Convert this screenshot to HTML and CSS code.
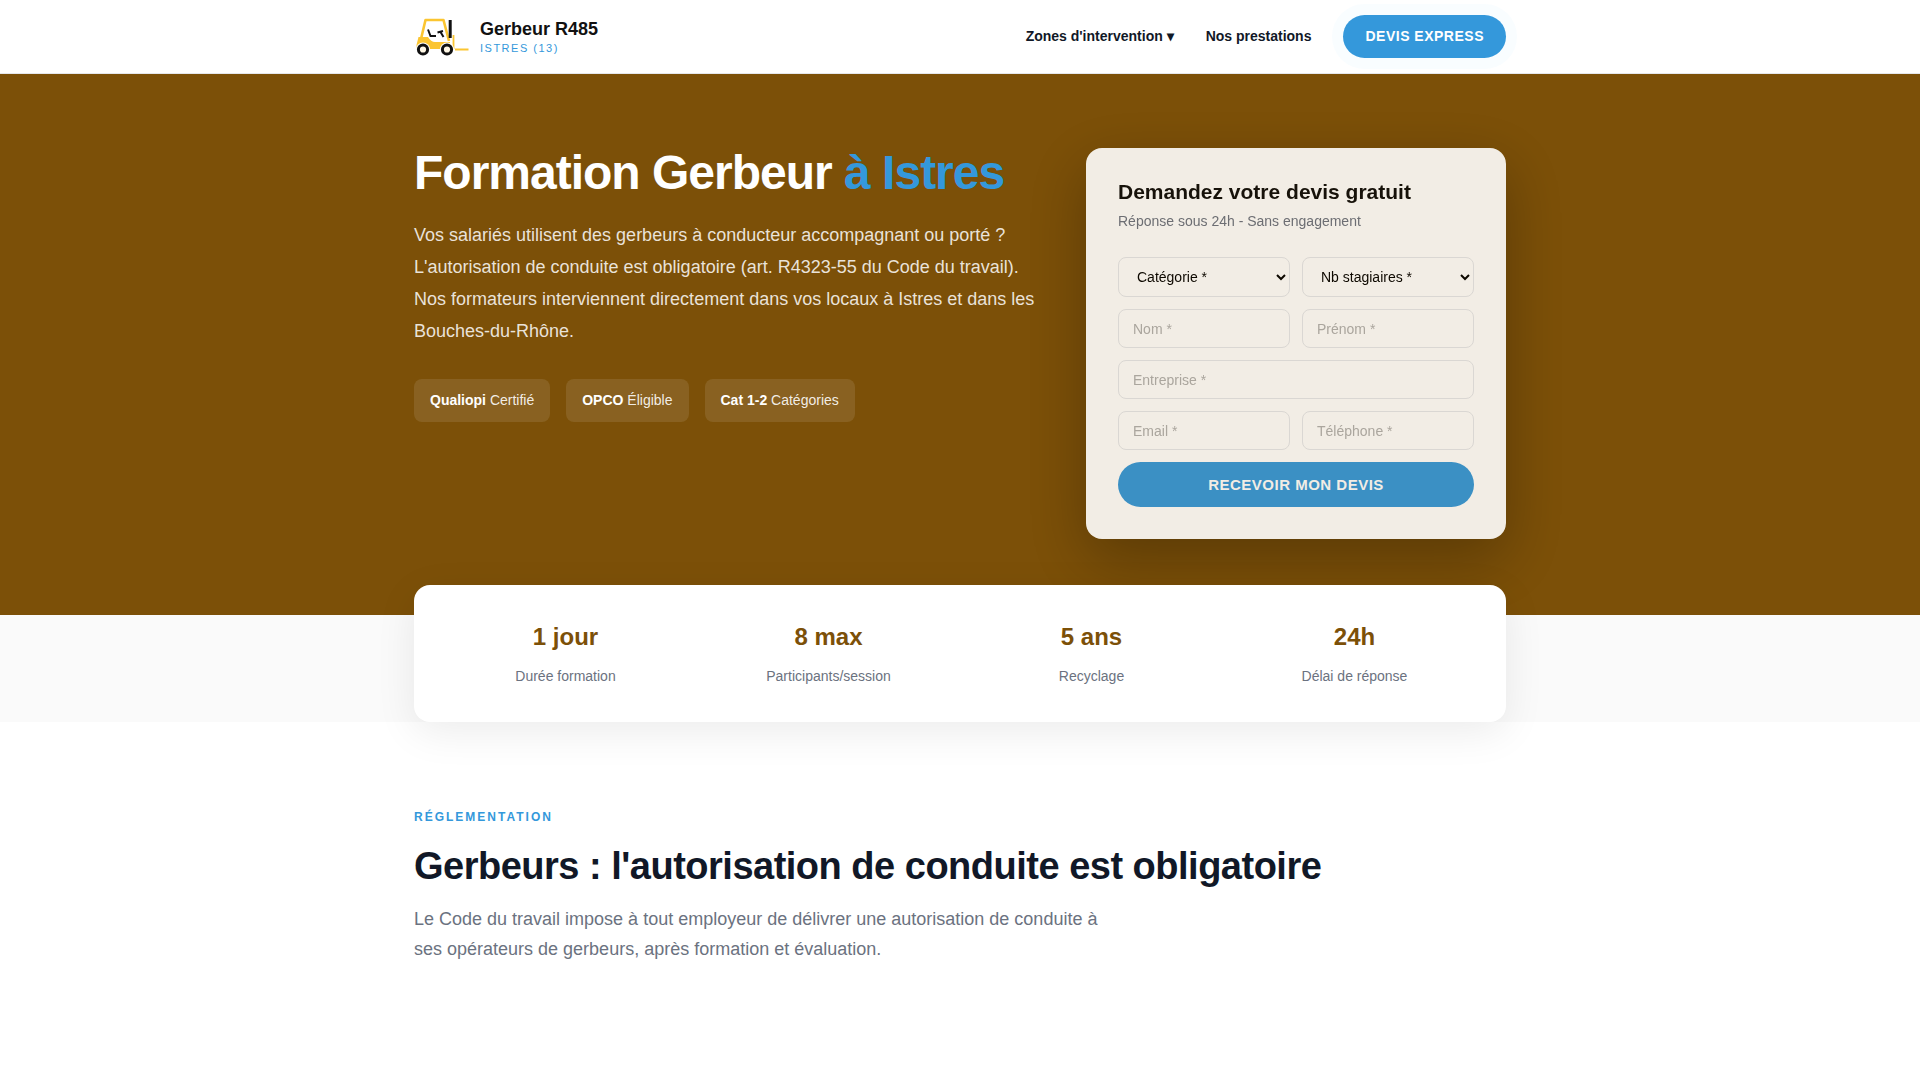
FILE: index.html
```html
<!DOCTYPE html>
<html lang="fr">
<head>
    <meta charset="UTF-8">
    <meta name="viewport" content="width=device-width, initial-scale=1.0">
    <title>Formation Gerbeur R485 à Istres</title>
    <link rel="stylesheet" href="styles.css">
</head>
<body>
    <header class="header">
        <div class="container header-inner">
            <a href="#" class="logo">
                <svg class="logo-icon" viewBox="0 0 56 40" aria-hidden="true">
                    <path d="M7 22 L11.5 3 H29.5 L35 24" fill="none" stroke="#fbc531" stroke-width="2.6" stroke-linejoin="round"/>
                    <path d="M2.5 28 L4.5 20 H14 Q17 25 21 25 H36 V32 H2.5 Z" fill="#fbc531"/>
                    <path d="M39.5 18 V32 M41 32.5 H54.5" fill="none" stroke="#fbc531" stroke-width="1.8"/>
                    <path d="M14 12.5 L16.5 19 H22 M23.5 15.5 L29 14 M26.5 15 L29.5 20" fill="none" stroke="#111" stroke-width="2"/>
                    <path d="M36.2 3 V21" stroke="#111" stroke-width="3"/>
                    <circle cx="9" cy="32.5" r="7" fill="#fff"/>
                    <circle cx="33" cy="32.5" r="7" fill="#fff"/>
                    <circle cx="9" cy="32.5" r="4.6" fill="#fff8e6" stroke="#111" stroke-width="3"/>
                    <circle cx="33" cy="32.5" r="4.6" fill="#fff8e6" stroke="#111" stroke-width="3"/>
                </svg>
                <span class="logo-text">
                    <span class="logo-name">Gerbeur R485</span>
                    <span class="logo-city">ISTRES (13)</span>
                </span>
            </a>
            <nav class="nav">
                <a href="#zones">Zones d'intervention ▾</a>
                <a href="#prestations">Nos prestations</a>
                <a href="#devis" class="btn-express">DEVIS EXPRESS</a>
            </nav>
        </div>
    </header>

    <section class="hero">
        <div class="container hero-grid">
            <div class="hero-content">
                <h1>Formation Gerbeur <span>à Istres</span></h1>
                <p>Vos salariés utilisent des gerbeurs à conducteur accompagnant ou porté ? L'autorisation de conduite est obligatoire (art. R4323-55 du Code du travail). Nos formateurs interviennent directement dans vos locaux à Istres et dans les Bouches-du-Rhône.</p>
                <div class="badges">
                    <div class="badge"><strong>Qualiopi</strong> Certifié</div>
                    <div class="badge"><strong>OPCO</strong> Éligible</div>
                    <div class="badge"><strong>Cat 1-2</strong> Catégories</div>
                </div>
            </div>
            <form class="form-card" id="devis">
                <h2>Demandez votre devis gratuit</h2>
                <p>Réponse sous 24h - Sans engagement</p>
                <div class="form-grid">
                    <select aria-label="Catégorie" required>
                        <option value="">Catégorie *</option>
                        <option>Catégorie 1</option>
                        <option>Catégorie 2</option>
                    </select>
                    <select aria-label="Nombre de stagiaires" required>
                        <option value="">Nb stagiaires *</option>
                        <option>1 à 4</option>
                        <option>5 à 8</option>
                    </select>
                    <input type="text" placeholder="Nom *" aria-label="Nom" required>
                    <input type="text" placeholder="Prénom *" aria-label="Prénom" required>
                    <input type="text" class="full" placeholder="Entreprise *" aria-label="Entreprise" required>
                    <input type="email" placeholder="Email *" aria-label="Email" required>
                    <input type="tel" placeholder="Téléphone *" aria-label="Téléphone" required>
                    <button type="submit" class="full">RECEVOIR MON DEVIS</button>
                </div>
            </form>
        </div>
    </section>

    <section class="stats">
        <div class="container">
            <div class="stats-card">
                <div class="stat"><strong>1 jour</strong><span>Durée formation</span></div>
                <div class="stat"><strong>8 max</strong><span>Participants/session</span></div>
                <div class="stat"><strong>5 ans</strong><span>Recyclage</span></div>
                <div class="stat"><strong>24h</strong><span>Délai de réponse</span></div>
            </div>
        </div>
    </section>

    <section class="section">
        <div class="container">
            <div class="section-label">RÉGLEMENTATION</div>
            <h2 class="section-title">Gerbeurs : l'autorisation de conduite est obligatoire</h2>
            <p class="section-text">Le Code du travail impose à tout employeur de délivrer une autorisation de conduite à ses opérateurs de gerbeurs, après formation et évaluation.</p>
        </div>
    </section>
</body>
</html>
```
FILE: styles.css
```css
* {
    margin: 0;
    padding: 0;
    box-sizing: border-box;
}
body {
    font-family: "Liberation Sans", Arial, sans-serif;
    font-size: 16px;
    line-height: 1.7;
    color: #111827;
    background: #fff;
}
a {
    color: inherit;
    text-decoration: none;
}
.container {
    max-width: 1140px;
    margin: 0 auto;
    padding: 0 24px;
}

/* Header */
.header {
    background: #fff;
    border-bottom: 1px solid #e5e7eb;
}
.header-inner {
    display: flex;
    justify-content: space-between;
    align-items: center;
    padding-top: 15px;
    padding-bottom: 15px;
}
.logo {
    display: flex;
    align-items: center;
    gap: 10px;
}
.logo-icon {
    width: 56px;
    height: 40px;
}
.logo-text {
    display: flex;
    flex-direction: column;
}
.logo-name {
    font-size: 18px;
    font-weight: 700;
    line-height: 22px;
    color: #111;
}
.logo-city {
    font-size: 11px;
    line-height: 16px;
    letter-spacing: 1.5px;
    color: #3498db;
}
.nav {
    display: flex;
    align-items: center;
    gap: 32px;
    font-size: 14px;
    font-weight: 600;
}
.btn-express {
    padding: 0 22px;
    border-radius: 50px;
    background: #3498db;
    color: #fff;
    font-size: 14px;
    line-height: 43px;
    letter-spacing: 0.5px;
    box-shadow: 0 0 0 11px rgba(52, 200, 255, 0.03);
}

/* Hero */
.hero {
    background: #7c5008;
    padding: 70px 0 76px;
}
.hero-grid {
    display: grid;
    grid-template-columns: 1fr 420px;
    gap: 48px;
    align-items: start;
}
.hero h1 {
    font-size: 48px;
    line-height: 57px;
    letter-spacing: -1px;
    color: #fff;
    margin-bottom: 18px;
}
.hero h1 span {
    color: #3498db;
}
.hero-content p {
    font-size: 18px;
    line-height: 32px;
    color: rgba(255, 255, 255, 0.85);
    margin-bottom: 32px;
}
.badges {
    display: flex;
    flex-wrap: wrap;
    gap: 16px;
}
.badge {
    padding: 10px 16px;
    border-radius: 8px;
    background: rgba(255, 255, 255, 0.1);
    color: rgba(255, 255, 255, 0.9);
    font-size: 14px;
    line-height: 23px;
}
.badge strong {
    color: #fff;
}

/* Devis form */
.form-card {
    margin-top: 4px;
    padding: 32px;
    border-radius: 16px;
    background: #fff;
    box-shadow: 0 20px 60px rgba(0, 0, 0, 0.3);
    opacity: 0.9;
}
.form-card h2 {
    font-size: 21px;
    line-height: 24px;
    color: #0c0c0c;
    margin-bottom: 6px;
}
.form-card p {
    font-size: 14px;
    line-height: 23px;
    color: #6b7280;
    margin-bottom: 24px;
}
.form-grid {
    display: grid;
    grid-template-columns: 1fr 1fr;
    gap: 12px;
}
.form-grid input,
.form-grid select {
    width: 100%;
    height: 39px;
    padding: 0 14px;
    border: 1px solid #e5e7eb;
    border-radius: 8px;
    background: transparent;
    font-family: inherit;
    font-size: 14px;
}
.form-grid select {
    height: 40px;
    color: #000;
}
.form-grid input::placeholder {
    color: #b0b0b0;
}
.form-grid .full {
    grid-column: 1 / -1;
}
.form-grid button {
    height: 45px;
    border: none;
    border-radius: 50px;
    background: #3498db;
    color: #fff;
    font-family: inherit;
    font-size: 15px;
    font-weight: 700;
    letter-spacing: 0.5px;
    cursor: pointer;
}

/* Stats */
.stats {
    display: flow-root;
    position: relative;
    background: #fafafa;
}
.stats-card {
    display: grid;
    grid-template-columns: repeat(4, 1fr);
    gap: 24px;
    margin-top: -30px;
    padding: 32px 32px 34px;
    border-radius: 16px;
    background: #fff;
    box-shadow: 0 10px 40px rgba(0, 0, 0, 0.08);
}
.stat {
    display: flex;
    flex-direction: column;
    gap: 8px;
    text-align: center;
}
.stat strong {
    font-size: 24px;
    line-height: 40px;
    color: #7c5008;
}
.stat span {
    font-size: 14px;
    line-height: 23px;
    color: #6b7280;
}

/* Sections */
.section {
    padding: 84px 0;
}
.section-label {
    font-size: 12px;
    font-weight: 700;
    line-height: 22px;
    letter-spacing: 2px;
    color: #3498db;
    margin-bottom: 12px;
}
.section-title {
    font-size: 38px;
    line-height: 52px;
    letter-spacing: -0.5px;
    color: #111827;
    margin-bottom: 12px;
}
.section-text {
    max-width: 700px;
    font-size: 18px;
    line-height: 30px;
    color: #6b7280;
}
```
